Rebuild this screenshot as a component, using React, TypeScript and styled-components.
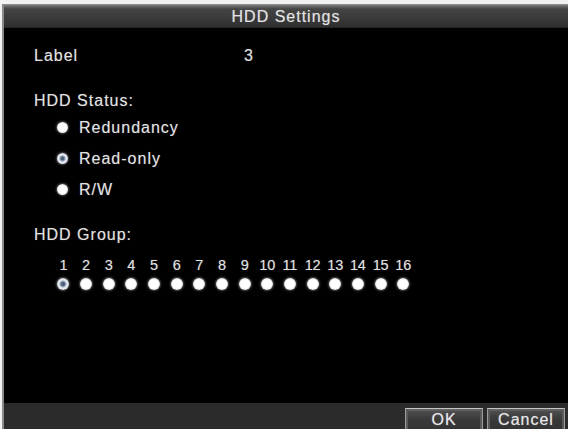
import React from "react";
import styled, { createGlobalStyle } from "styled-components";

const Global = createGlobalStyle`
  html, body { margin: 0; padding: 0; background: #f2f2f2; }
  body { font-family: "Liberation Sans", Arial, sans-serif; overflow: hidden; }
`;

const Frame = styled.div`
  margin: 4px 0 0 2px;
  width: 566px;
  height: 425px;
  box-sizing: border-box;
  border-left: 2px solid #8a8a8a;
  display: flex;
  flex-direction: column;
  background: #000;
`;

const TitleBar = styled.div`
  height: 24px;
  flex: none;
  display: flex;
  align-items: center;
  justify-content: center;
  background: linear-gradient(#9a9a9a 0px, #6a6a6a 2px, #444 5px, #3a3a3a 14px, #2e2e2e 23px, #1a1a1a 24px);
  color: #e2e2e2;
  font-size: 16px;
  letter-spacing: 1px;
  padding-top: 1px;
  box-sizing: border-box;
  text-shadow: 0 0 1px rgba(255, 255, 255, 0.4);
`;

const Body = styled.div`
  flex: 1;
  background: #000;
  padding: 18px 0 0 30px;
  color: #e2e2e2;
  text-shadow: 0 0 1px rgba(255, 255, 255, 0.35);
`;

const Row = styled.div<{ $mt?: number }>`
  display: grid;
  grid-template-columns: 210px auto;
  height: 20px;
  line-height: 20px;
  font-size: 16px;
  letter-spacing: 1px;
  margin-top: ${(p) => p.$mt ?? 0}px;
`;

const Heading = styled.div<{ $mt: number }>`
  height: 20px;
  line-height: 20px;
  font-size: 16px;
  letter-spacing: 1px;
  margin-top: ${(p) => p.$mt}px;
`;

const RadioList = styled.div`
  margin-top: 1px;
  padding-left: 23px;
  display: flex;
  flex-direction: column;
`;

const RadioRow = styled.div`
  height: 31px;
  display: flex;
  align-items: center;
  gap: 11px;
  font-size: 16px;
  letter-spacing: 1px;
`;

const Dot = styled.span<{ $on?: boolean; $size?: number }>`
  flex: none;
  display: block;
  width: ${(p) => p.$size ?? 12}px;
  height: ${(p) => p.$size ?? 12}px;
  border-radius: 50%;
  background: ${(p) =>
    p.$on
      ? "radial-gradient(circle, #4f607a 0 20%, #9aa8bc 32%, #eef2f7 50%, #c4ccd8 75%, #8c96a4 100%)"
      : "radial-gradient(circle, #ffffff 0 45%, #f2f2f2 62%, #c8c8c8 85%, #9a9a9a 100%)"};
  box-shadow: 0 0 2px 1px rgba(255, 255, 255, 0.3);
`;

const GroupGrid = styled.div<{ $mt?: number }>`
  margin-left: 18px;
  margin-top: ${(p) => p.$mt ?? 0}px;
  display: grid;
  grid-template-columns: repeat(16, 22.67px);
`;

const Num = styled.div`
  height: 16px;
  line-height: 16px;
  text-align: center;
  font-size: 14.5px;
  letter-spacing: -0.2px;
`;

const DotCell = styled.div`
  height: 14px;
  display: flex;
  align-items: center;
  justify-content: center;
`;

const Footer = styled.div`
  height: 26px;
  flex: none;
  background: #2b2b2b;
  display: flex;
  justify-content: flex-end;
  align-items: flex-end;
  gap: 4px;
  padding-right: 3px;
`;

const Button = styled.div`
  width: 78px;
  height: 21px;
  box-sizing: border-box;
  border: 1px solid #9c9c9c;
  border-top-color: #c4c4c4;
  border-bottom: none;
  background: linear-gradient(#6a6a6a 0px, #4a4a4a 3px, #3a3a3a 10px, #333 21px);
  box-shadow: inset 2px 0 0 #5a5a5a, inset -2px 0 0 #5a5a5a;
  color: #e6e6e6;
  font-size: 16px;
  letter-spacing: 1px;
  display: flex;
  align-items: center;
  justify-content: center;
  padding-top: 1px;
  text-shadow: 0 0 1px rgba(255, 255, 255, 0.5);
`;

const statuses = [
  { label: "Redundancy", on: false },
  { label: "Read-only", on: true },
  { label: "R/W", on: false },
];

const groups = Array.from({ length: 16 }, (_, i) => i + 1);

export default function App() {
  return (
    <>
      <Global />
      <Frame>
        <TitleBar>HDD Settings</TitleBar>
        <Body>
          <Row>
            <span>Label</span>
            <span>3</span>
          </Row>
          <Heading $mt={25}>HDD Status:</Heading>
          <RadioList>
            {statuses.map((s) => (
              <RadioRow key={s.label}>
                <Dot $on={s.on} $size={11} />
                <span>{s.label}</span>
              </RadioRow>
            ))}
          </RadioList>
          <Heading $mt={20}>HDD Group:</Heading>
          <GroupGrid $mt={12}>
            {groups.map((g) => (
              <Num key={g}>{g}</Num>
            ))}
          </GroupGrid>
          <GroupGrid $mt={4}>
            {groups.map((g) => (
              <DotCell key={g}>
                <Dot $on={g === 1} />
              </DotCell>
            ))}
          </GroupGrid>
        </Body>
        <Footer>
          <Button>OK</Button>
          <Button>Cancel</Button>
        </Footer>
      </Frame>
    </>
  );
}
